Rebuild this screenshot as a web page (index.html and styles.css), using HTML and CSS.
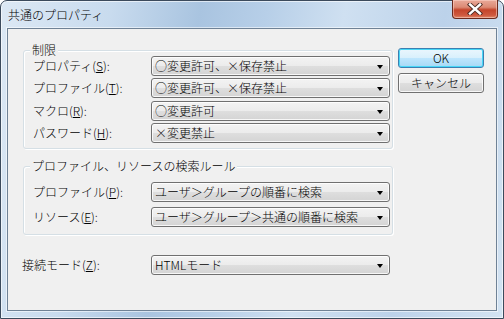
FILE: index.html
```html
<!DOCTYPE html>
<html>
<head>
  <title>共通のプロパティ</title>
  <link rel="stylesheet" href="styles.css">
</head>
<body>
  <div class="window">
    <div class="titlebar">
      <span class="title">共通のプロパティ</span>
      <div class="close-btn">
        <svg width="18" height="12" viewBox="0 0 18 12">
          <path d="M4 1.5 L14 10.5 M14 1.5 L4 10.5" stroke="#4a2a22" stroke-width="4.2" stroke-linecap="square"/>
          <path d="M4 1.5 L14 10.5 M14 1.5 L4 10.5" stroke="#ffffff" stroke-width="2.4" stroke-linecap="square"/>
        </svg>
      </div>
    </div>

    <div class="client">
      <div class="main">
        <div class="group group-limits">
          <span class="group-title">制限</span>
          <div class="row">
            <label class="label">プロパティ(<u>S</u>):</label>
            <div class="combo"><span>○変更許可、×保存禁止</span><i class="arrow"></i></div>
          </div>
          <div class="row">
            <label class="label">プロファイル(<u>T</u>):</label>
            <div class="combo"><span>○変更許可、×保存禁止</span><i class="arrow"></i></div>
          </div>
          <div class="row">
            <label class="label">マクロ(<u>R</u>):</label>
            <div class="combo"><span>○変更許可</span><i class="arrow"></i></div>
          </div>
          <div class="row">
            <label class="label">パスワード(<u>H</u>):</label>
            <div class="combo"><span>×変更禁止</span><i class="arrow"></i></div>
          </div>
        </div>

        <div class="group group-search">
          <span class="group-title">プロファイル、リソースの検索ルール</span>
          <div class="row">
            <label class="label">プロファイル(<u>P</u>):</label>
            <div class="combo"><span>ユーザ＞グループの順番に検索</span><i class="arrow"></i></div>
          </div>
          <div class="row">
            <label class="label">リソース(<u>E</u>):</label>
            <div class="combo"><span>ユーザ＞グループ＞共通の順番に検索</span><i class="arrow"></i></div>
          </div>
        </div>

        <div class="row row-mode">
          <label class="label">接続モード(<u>Z</u>):</label>
          <div class="combo"><span>HTMLモード</span><i class="arrow"></i></div>
        </div>
      </div>

      <div class="buttons">
        <div class="btn btn-default">OK</div>
        <div class="btn">キャンセル</div>
      </div>
    </div>
  </div>
</body>
</html>
```

FILE: styles.css
```css
body {
  margin: 0;
  font-family: "Noto Sans CJK JP", "Liberation Sans", sans-serif;
  font-size: 12px;
  font-weight: 300;
  color: #000;
}

.window {
  width: 504px;
  height: 319px;
  box-sizing: border-box;
  border: 1px solid #3b4a5c;
  border-radius: 7px 7px 0 0;
  background: linear-gradient(100deg, #dce8f4 0%, #c8dbee 20%, #a9c4e0 36%, #b7cfe8 48%, #cfe0f1 62%, #bcd2ea 80%, #d3e3f2 100%);
  box-shadow: inset 0 0 0 1px rgba(255, 255, 255, 0.6);
}

.titlebar {
  height: 27px;
  display: flex;
  justify-content: space-between;
  align-items: flex-start;
}

.title {
  padding: 7px 0 0 7px;
  line-height: 14px;
}

.close-btn {
  width: 44px;
  height: 18px;
  margin: -1px 5px 0 0;
  border: 1px solid #6a2a1e;
  border-top: none;
  border-radius: 0 0 4px 4px;
  background: linear-gradient(#e9a999 0%, #dc8a74 40%, #c4452b 55%, #cf5a40 85%, #e08a6a 100%);
  box-shadow: inset 0 0 0 1px rgba(255, 220, 210, 0.5);
  display: flex;
  align-items: center;
  justify-content: center;
}

.client {
  margin-left: 6px;
  width: 490px;
  height: 283px;
  box-sizing: border-box;
  border: 1px solid #6f8296;
  box-shadow: 0 0 0 1px rgba(255, 255, 255, 0.55);
  background: #f0f0f0;
  padding: 19px 0 0 15px;
  display: flex;
  align-items: flex-start;
}

.main {
  width: 370px;
}

.group {
  position: relative;
  box-sizing: border-box;
  border: 1px solid #d5dfe5;
  border-radius: 3px;
  box-shadow: inset 1px 1px 0 #fff, 1px 1px 0 #fff;
  padding: 0 2px 0 9px;
}

.group-title {
  position: absolute;
  top: -8px;
  left: 6px;
  padding: 0 2px;
  line-height: 14px;
  background: #f0f0f0;
}

.group-limits {
  margin-top: 2px;
  height: 99px;
  padding-top: 5px;
}

.group-limits .row {
  margin-bottom: 2.35px;
}

.group-search {
  margin-top: 17px;
  height: 69px;
  padding-top: 15px;
}

.group-search .row {
  margin-bottom: 5px;
}

.row {
  display: flex;
  align-items: center;
  height: 20px;
  box-sizing: border-box;
}

.label {
  width: 118px;
  line-height: 14px;
}

.combo {
  width: 239px;
  height: 20px;
  box-sizing: border-box;
  border: 1px solid #707070;
  border-radius: 3px;
  background: linear-gradient(#f3f3f3 0%, #ececec 48%, #dedede 52%, #d4d4d4 100%);
  box-shadow: inset 0 0 0 1px rgba(255, 255, 255, 0.8);
  display: flex;
  align-items: center;
  justify-content: space-between;
  padding: 0 6px 0 3px;
  line-height: 14px;
  white-space: nowrap;
}

.arrow {
  width: 0;
  height: 0;
  border-left: 3.5px solid transparent;
  border-right: 3.5px solid transparent;
  border-top: 4px solid #000;
  margin-top: 2px;
}

.row-mode {
  margin-top: 20px;
  margin-left: -1px;
}

.row-mode .label {
  width: 129px;
}

.buttons {
  margin-left: 5px;
  display: flex;
  flex-direction: column;
  gap: 5px;
}

.btn {
  width: 86px;
  height: 20px;
  box-sizing: border-box;
  border: 1px solid #707070;
  border-radius: 3px;
  background: linear-gradient(#f3f3f3 0%, #ececec 48%, #dedede 52%, #d4d4d4 100%);
  box-shadow: inset 0 0 0 1px rgba(255, 255, 255, 0.8);
  text-align: center;
  line-height: 17px;
}

.btn-default {
  border-color: #3c7fb1;
  background: linear-gradient(#eaf6fd 0%, #d9f0fc 48%, #bee6fd 52%, #a7d9f5 100%);
  box-shadow: inset 0 0 0 1px #48d7f7;
}
```
